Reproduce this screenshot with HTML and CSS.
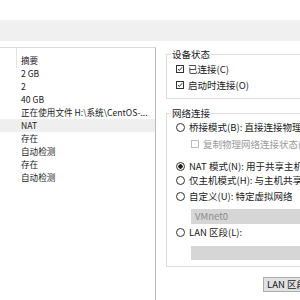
FILE: index.html
```html
<!DOCTYPE html>
<html lang="zh-CN">
<head>
    <meta charset="UTF-8">
    <title>虚拟机设置</title>
    <link rel="stylesheet" href="styles.css">
</head>
<body>
    <div class="titlebar"></div>
    <div class="band"></div>

    <div class="content">
        <div class="list">
            <div class="row">摘要</div>
            <div class="row">2 GB</div>
            <div class="row">2</div>
            <div class="row">40 GB</div>
            <div class="row">正在使用文件 H:\系统\CentOS-...</div>
            <div class="row sel">NAT</div>
            <div class="row">存在</div>
            <div class="row">自动检测</div>
            <div class="row">存在</div>
            <div class="row">自动检测</div>
        </div>

        <div class="panel">
            <fieldset class="group">
                <legend>设备状态</legend>
                <div class="opt">
                    <span class="check"><svg viewBox="0 0 8 8"><polyline points="1.2,4 3.2,6 6.8,1.6"/></svg></span>
                    <span>已连接(C)</span>
                </div>
                <div class="opt">
                    <span class="check"><svg viewBox="0 0 8 8"><polyline points="1.2,4 3.2,6 6.8,1.6"/></svg></span>
                    <span>启动时连接(O)</span>
                </div>
            </fieldset>

            <fieldset class="group net">
                <legend>网络连接</legend>
                <div class="opt radio-row">
                    <span class="radio"></span>
                    <span>桥接模式(B): 直接连接物理网络</span>
                </div>
                <div class="opt sub disabled">
                    <span class="check off"></span>
                    <span>复制物理网络连接状态(P)</span>
                </div>
                <div class="opt radio-row gap">
                    <span class="radio on"></span>
                    <span>NAT 模式(N): 用于共享主机的 IP 地址</span>
                </div>
                <div class="opt radio-row">
                    <span class="radio"></span>
                    <span>仅主机模式(H): 与主机共享的专用网络</span>
                </div>
                <div class="opt radio-row custom">
                    <span class="radio"></span>
                    <span>自定义(U): 特定虚拟网络</span>
                </div>
                <div class="select">VMnet0</div>
                <div class="opt radio-row lan">
                    <span class="radio"></span>
                    <span>LAN 区段(L):</span>
                </div>
                <div class="select empty"></div>
            </fieldset>

            <button class="btn">LAN 区段(S)...</button>
        </div>
    </div>
</body>
</html>
```

FILE: styles.css
```css
body {
    margin: 0;
    width: 300px;
    height: 300px;
    overflow: hidden;
    background: #ffffff;
    color: #1a1a1a;
    font-family: "Noto Sans CJK SC", "Noto Sans", sans-serif;
    font-size: 9.5px;
}
.titlebar {
    height: 20px;
}
.band {
    height: 21px;
    background: #f0f0f0;
}
.content {
    display: flex;
    margin-top: 6px;
    height: 253px;
}
.list {
    position: relative;
    flex-shrink: 0;
    box-sizing: border-box;
    width: 156px;
    border-top: 1px solid #dadada;
    border-right: 1px solid #b9b9b9;
    padding-top: 6px;
    font-size: 8.6px;
}
.list::before {
    content: "";
    position: absolute;
    left: 16px;
    top: 0;
    width: 1px;
    height: 20px;
    background: #e3e3e3;
}
.row {
    height: 13px;
    line-height: 13px;
    padding-left: 21px;
    white-space: nowrap;
    overflow: hidden;
}
.row.sel {
    background: #efefef;
}

.panel {
    flex-shrink: 0;
    width: 220px;
    margin-left: 10px;
    padding-top: 1px;
}
.group {
    margin: 0;
    padding: 0 0 5px 4px;
    border: 1px solid #dcdcdc;
    border-right: none;
}
.group legend {
    padding: 0 1px;
    line-height: 13px;
    color: #222;
}
.opt {
    display: flex;
    align-items: center;
    gap: 4px;
    height: 16px;
    margin-left: 5px;
    white-space: nowrap;
}
.check {
    display: flex;
    box-sizing: border-box;
    width: 8px;
    height: 8px;
    border: 1px solid #333;
    background: #fff;
}
.check svg {
    width: 6px;
    height: 6px;
    fill: none;
    stroke: #222;
    stroke-width: 1.3;
    overflow: visible;
}
.check.off {
    border-color: #bcbcbc;
}

.net {
    margin-top: 8px;
    padding-bottom: 6px;
}
.radio-row {
    height: 14px;
}
.radio {
    box-sizing: border-box;
    width: 9px;
    height: 9px;
    border: 1px solid #333;
    border-radius: 50%;
    background: #fff;
}
.radio.on {
    background: radial-gradient(circle, #1f1f1f 0 2px, #fff 2.4px);
}
.sub {
    height: 14px;
    margin-top: 3px;
    margin-left: 20px;
}
.disabled {
    color: #9a9a9a;
}
.gap {
    margin-top: 8px;
}
.custom {
    margin-top: 2px;
}
.select {
    box-sizing: border-box;
    height: 15px;
    line-height: 15px;
    margin: 6px 0 0 20px;
    padding-left: 4px;
    background: #d6d6d6;
    color: #8c8c8c;
}
.lan {
    margin-top: 1px;
}
.select.empty {
    height: 14px;
    margin-top: 7px;
}
.btn {
    display: block;
    box-sizing: border-box;
    height: 15px;
    margin: 10px 0 0 97px;
    padding: 0 3px;
    border: 1px solid #adadad;
    background: #e1e1e1;
    color: #1a1a1a;
    font-family: inherit;
    font-size: 9.5px;
    line-height: 13px;
    white-space: nowrap;
}
```
